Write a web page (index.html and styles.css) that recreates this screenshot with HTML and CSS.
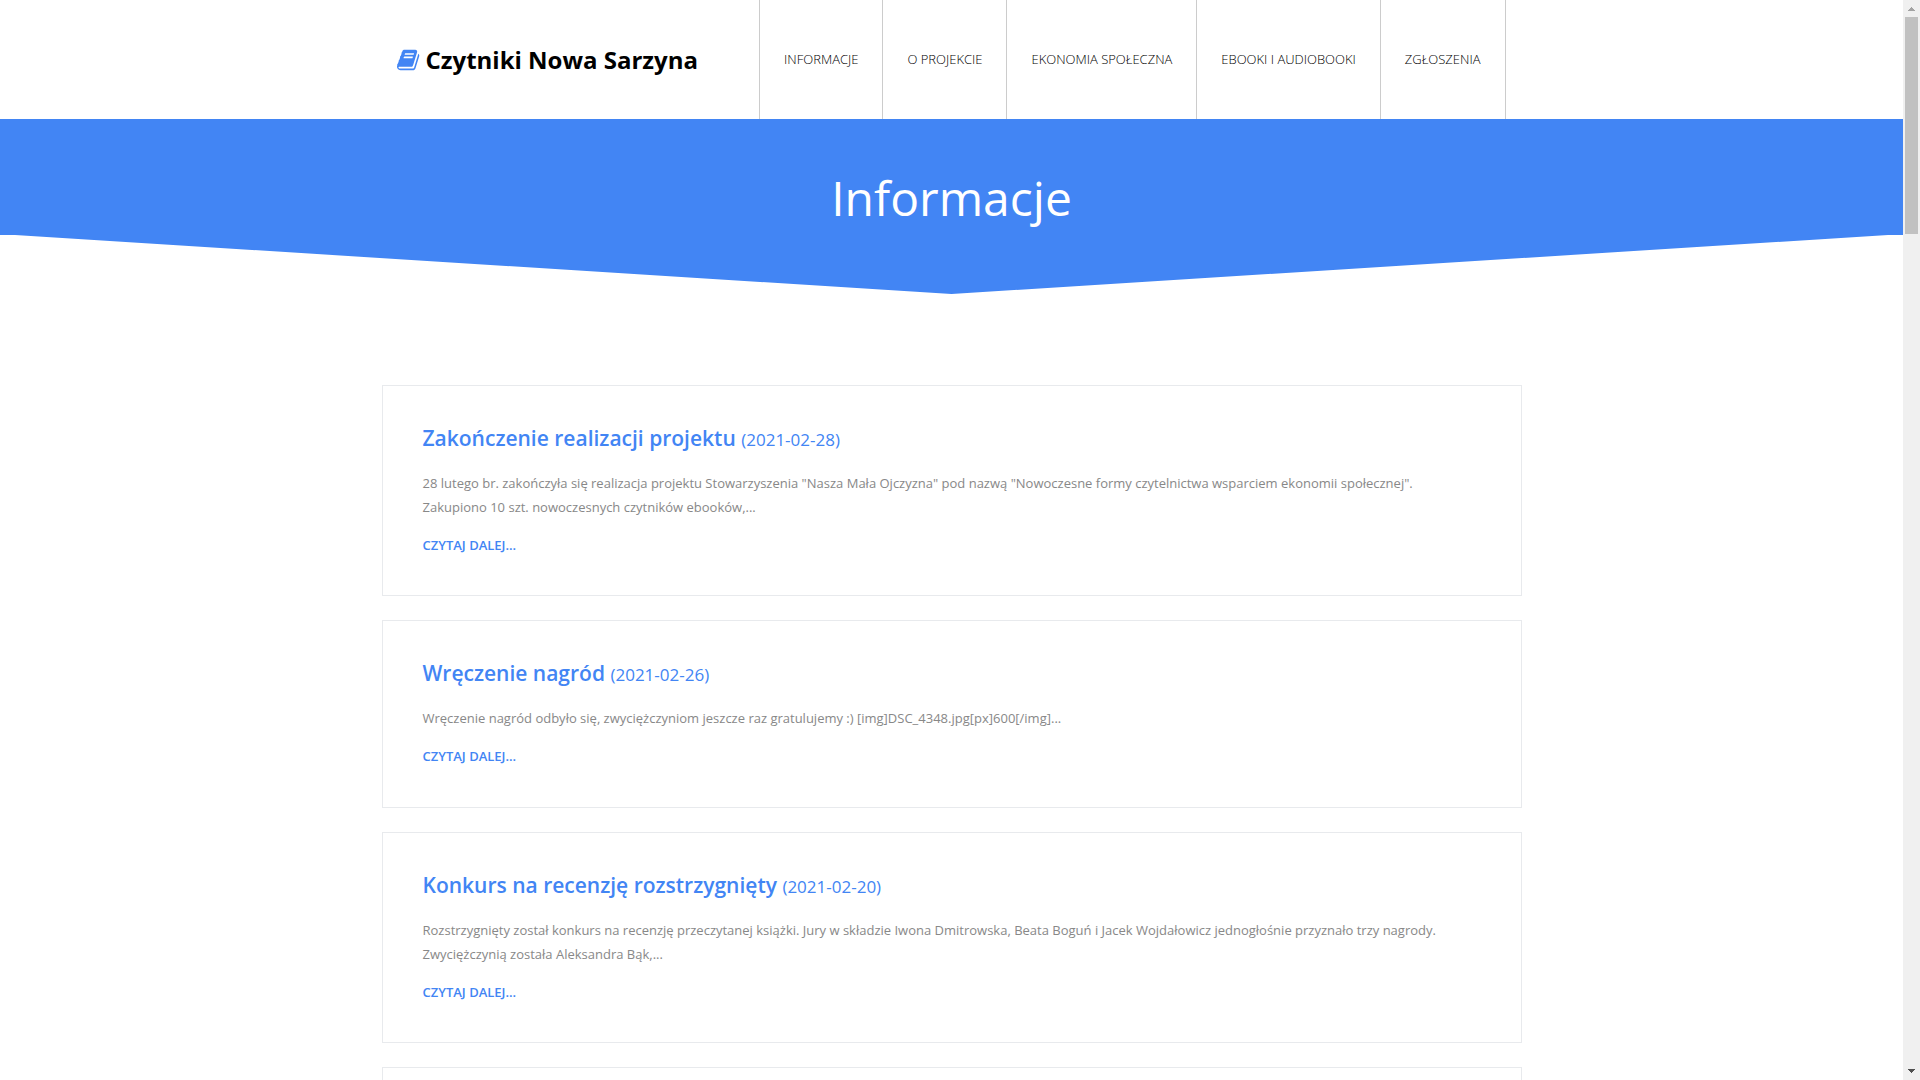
FILE: index.html
```html
<!DOCTYPE html>
<html lang="pl">
<head>
<meta charset="utf-8">
<title>Czytniki Nowa Sarzyna</title>
<link rel="stylesheet" href="styles.css">
</head>
<body>
<div class="viewport">
  <div class="page">
    <header class="header">
      <div class="container header-row">
        <a class="logo" href="#">
          <svg class="logo-icon" viewBox="0 0 1792 1792" aria-hidden="true"><path d="M1639 478q40 57 18 129l-275 906q-19 64-76.500 107.500t-122.500 43.500h-923q-77 0-148.500-53.500t-99.500-131.500q-24-67-2-127 0-4 3-27t4-37q1-8-3-21.500t-3-19.500q2-11 8-21t16.500-23.500 16.500-23.500q23-38 45-91.500t30-91.500q3-10 .5-30t-.5-28q3-11 17-28t17-23q21-36 42-92t25-90q1-9-2.500-32t.5-28q4-13 22-30.500t22-22.500q19-26 42.500-84.500t27.500-96.500q1-8-3-25.500t-2-26.500q2-8 9-18t18-23 17-21q8-12 16.500-30.500t15-35 16-36 19.500-32 26.500-23.500 36-11.500 47.500 5.500l-1 3q38-9 51-9h761q74 0 114 56t18 130l-274 906q-36 119-71.500 153.500t-128.500 34.500h-869q-27 0-38 15-11 16-1 43 24 70 144 70h923q29 0 56-15.500t35-41.500l300-987q7-22 5-57 38 15 59 43zm-1064 2q-4 13 2 22.500t20 9.500h608q13 0 25.500-9.500t16.500-22.500l21-64q4-13-2-22.500t-20-9.500h-608q-13 0-25.500 9.500t-16.500 22.500zm-83 256q-4 13 2 22.500t20 9.500h608q13 0 25.500-9.500t16.500-22.500l21-64q4-13-2-22.500t-20-9.500h-608q-13 0-25.500 9.500t-16.500 22.500z"/></svg>
          <span>Czytniki Nowa Sarzyna</span>
        </a>
        <nav class="nav">
          <a href="#">INFORMACJE</a>
          <a href="#">O PROJEKCIE</a>
          <a href="#">EKONOMIA SPOŁECZNA</a>
          <a href="#">EBOOKI I AUDIOBOOKI</a>
          <a href="#">ZGŁOSZENIA</a>
        </nav>
      </div>
    </header>

    <section class="hero">
      <h1>Informacje</h1>
    </section>

    <main class="container posts">
      <article class="post">
        <h2><a href="#">Zakończenie realizacji projektu <small>(2021-02-28)</small></a></h2>
        <p>28 lutego br. zakończyła się realizacja projektu Stowarzyszenia "Nasza Mała Ojczyzna" pod nazwą "Nowoczesne formy czytelnictwa wsparciem ekonomii społecznej". Zakupiono 10 szt. nowoczesnych czytników ebooków,...</p>
        <a class="more" href="#">CZYTAJ DALEJ...</a>
      </article>
      <article class="post">
        <h2><a href="#">Wręczenie nagród <small>(2021-02-26)</small></a></h2>
        <p>Wręczenie nagród odbyło się, zwyciężczyniom jeszcze raz gratulujemy :) [img]DSC_4348.jpg[px]600[/img]...</p>
        <a class="more" href="#">CZYTAJ DALEJ...</a>
      </article>
      <article class="post">
        <h2><a href="#">Konkurs na recenzję rozstrzygnięty <small>(2021-02-20)</small></a></h2>
        <p>Rozstrzygnięty został konkurs na recenzję przeczytanej książki. Jury w składzie Iwona Dmitrowska, Beata Boguń i Jacek Wojdałowicz jednogłośnie przyznało trzy nagrody. Zwyciężczynią została Aleksandra Bąk,...</p>
        <a class="more" href="#">CZYTAJ DALEJ...</a>
      </article>
      <article class="post"></article>
    </main>
  </div>

  <div class="scrollbar" aria-hidden="true">
    <svg class="arrow arrow-up" viewBox="0 0 7 4"><path d="M3 0h1v1h1v1h1v1h1v1H0V3h1V2h1V1h1z"/></svg>
    <div class="track"><div class="thumb"></div></div>
    <svg class="arrow arrow-down" viewBox="0 0 7 4"><path d="M0 0h7v1H6v1H5v1H4v1H3V3H2V2H1V1H0z"/></svg>
  </div>
</div>
</body>
</html>
```
FILE: styles.css
```css
* {
  box-sizing: border-box;
}

body {
  margin: 0;
  background: #fff;
  color: #888;
  font: 13px/24px "Open Sans", "Noto Sans", sans-serif;
}

a {
  color: #4285f4;
  text-decoration: none;
}

.viewport {
  display: flex;
  height: 100vh;
}

.page {
  flex: 1;
  min-width: 0;
  overflow: hidden;
}

.container {
  max-width: 1140px;
  margin: 0 auto;
}

/* Header */
.header-row {
  display: flex;
  justify-content: space-between;
  padding: 0 16px 0 15px;
}

.logo {
  display: flex;
  align-items: center;
  gap: 5px;
  color: #000;
  font-size: 24px;
  font-weight: 700;
}

.logo-icon {
  width: 24px;
  height: 24px;
  fill: #4285f4;
}

.nav {
  display: flex;
  border-left: 1px solid #ccc;
}

.nav a {
  padding: 47px 24px 48px;
  border-right: 1px solid #ccc;
  color: #000;
  font-weight: 300;
}

/* Page title */
.hero {
  height: 175px;
  padding-top: 47px;
  background: #4285f4;
  clip-path: polygon(0 0, 100% 0, 100% 116px, calc(100% - 15px) 116px, 50% 100%, 15px 116px, 0 116px);
  text-align: center;
}

h1 {
  margin: 0;
  color: #fff;
  font-size: 48px;
  font-weight: 400;
  line-height: 64px;
}

/* Posts */
.posts {
  display: flex;
  flex-direction: column;
  gap: 24px;
  padding-top: 91px;
}

.post {
  min-height: 188px;
  padding: 39px 60px 38px 40px;
  border: 1px solid #e8eaed;
}

.post h2 {
  margin: 0 0 20px;
  font-size: 21px;
  font-weight: 600;
  line-height: 26px;
}

.post small {
  font-size: 17px;
  font-weight: 400;
  line-height: 1;
}

.post p {
  margin: 0 0 14px;
}

.more {
  display: block;
  font-weight: 600;
}

/* Scroll bar */
.scrollbar {
  display: flex;
  flex-direction: column;
  align-items: center;
  width: 17px;
  padding: 7px 2px;
  background: #f0f0f0;
}

.arrow {
  width: 7px;
  height: 4px;
  fill: #a3a3a3;
  shape-rendering: crispEdges;
}

.arrow-down {
  fill: #505050;
}

.track {
  flex: 1;
  align-self: stretch;
  margin: 6px 0;
}

.thumb {
  height: 217px;
  background: #c1c1c1;
}
```
